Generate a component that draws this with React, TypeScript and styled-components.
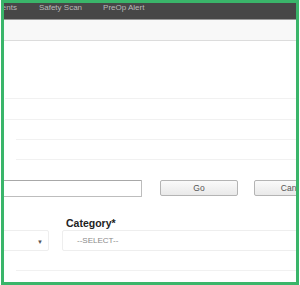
import React from "react";
import styled, { createGlobalStyle } from "styled-components";

const Global = createGlobalStyle`
  html, body { margin: 0; padding: 0; background: #ffffff; }
  body { font-family: "Liberation Sans", Arial, sans-serif; }
`;

const Frame = styled.div`
  box-sizing: border-box;
  width: 298px;
  height: 285px;
  margin-left: 1px;
  border: 3px solid #3ab56a;
  overflow: hidden;
  display: flex;
  flex-direction: column;
  background: #fff;
`;

const NavBar = styled.nav`
  height: 16px;
  flex: none;
  background: #474747;
  border-bottom: 1px solid #9a9a9a;
  display: flex;
  align-items: flex-start;
  margin-left: -16px;
  overflow: hidden;
`;

const NavItem = styled.span<{ $gap: number }>`
  font-size: 8px;
  line-height: 9px;
  color: #b9b9b9;
  white-space: nowrap;
  flex: none;
  margin-right: ${(p) => p.$gap}px;
`;

const SubBar = styled.div`
  height: 20px;
  flex: none;
  background: #f8f8f8;
  border-bottom: 1px solid #dcdcdc;
`;

const Spacer = styled.div<{ $h: number }>`
  height: ${(p) => p.$h}px;
  flex: none;
`;

const LineRow = styled.div<{ $h: number; $indent: number }>`
  height: ${(p) => p.$h}px;
  flex: none;
  margin-left: ${(p) => p.$indent}px;
  border-top: 1px solid #f1f1f1;
  box-sizing: border-box;
`;

const ActionRow = styled.div`
  display: flex;
  align-items: flex-start;
  height: 17px;
  flex: none;
  margin-left: -6px;
`;

const TextInput = styled.div`
  box-sizing: border-box;
  flex: none;
  width: 144px;
  height: 17px;
  border: 1px solid #bdbdbd;
  border-top-color: #a8a8a8;
  border-radius: 1px;
  background: #fff;
  margin-right: 18px;
`;

const Button = styled.button<{ $w: number }>`
  box-sizing: border-box;
  width: ${(p) => p.$w}px;
  height: 16px;
  padding: 0;
  border: 1px solid #b4b4b4;
  border-radius: 2px;
  background: linear-gradient(#fafafa, #e9e9e9);
  font-family: "Liberation Sans", Arial, sans-serif;
  font-size: 8.5px;
  color: #555;
  margin-right: 16px;
  flex: none;
  text-align: center;
`;

const LabelRow = styled.div`
  height: 13px;
  flex: none;
  display: flex;
  align-items: flex-end;
  padding-left: 62px;
`;

const Label = styled.span`
  font-size: 10.5px;
  font-weight: bold;
  color: #222;
  line-height: 11px;
`;

const SelectRow = styled.div`
  display: flex;
  height: 21px;
  flex: none;
  margin-left: -6px;
  margin-top: 1px;
`;

const Select = styled.div<{ $w: number; $pad: number; $justify: string; $gap: number }>`
  box-sizing: border-box;
  width: ${(p) => p.$w}px;
  height: 21px;
  border: 1px solid #eeeeee;
  border-radius: 2px;
  display: flex;
  align-items: center;
  justify-content: ${(p) => p.$justify};
  padding: 0 ${(p) => p.$pad}px;
  margin-right: ${(p) => p.$gap}px;
  font-size: 8px;
  color: #8a8a8a;
  flex: none;
`;

const Arrow = styled.span`
  font-size: 6px;
  color: #555;
  padding-top: 2px;
`;

export default function App() {
  return (
    <>
      <Global />
      <Frame>
        <NavBar>
          <NavItem $gap={22}>Patients</NavItem>
          <NavItem $gap={21}>Safety Scan</NavItem>
          <NavItem $gap={21}>PreOp Alert</NavItem>
        </NavBar>
        <SubBar />
        <Spacer $h={57} />
        <LineRow $h={21} $indent={1} />
        <LineRow $h={20} $indent={1} />
        <LineRow $h={20} $indent={12} />
        <LineRow $h={21} $indent={12} />
        <ActionRow>
          <TextInput />
          <Button $w={78}>Go</Button>
          <Button $w={80}>Cancel</Button>
        </ActionRow>
        <Spacer $h={19} />
        <LabelRow>
          <Label>Category*</Label>
        </LabelRow>
        <SelectRow>
          <Select $w={51} $pad={5} $justify="flex-end" $gap={13}>
            <Arrow>▼</Arrow>
          </Select>
          <Select $w={260} $pad={14} $justify="flex-start" $gap={0}>
            --SELECT--
          </Select>
        </SelectRow>
        <Spacer $h={19} />
        <LineRow $h={14} $indent={12} />
      </Frame>
    </>
  );
}
